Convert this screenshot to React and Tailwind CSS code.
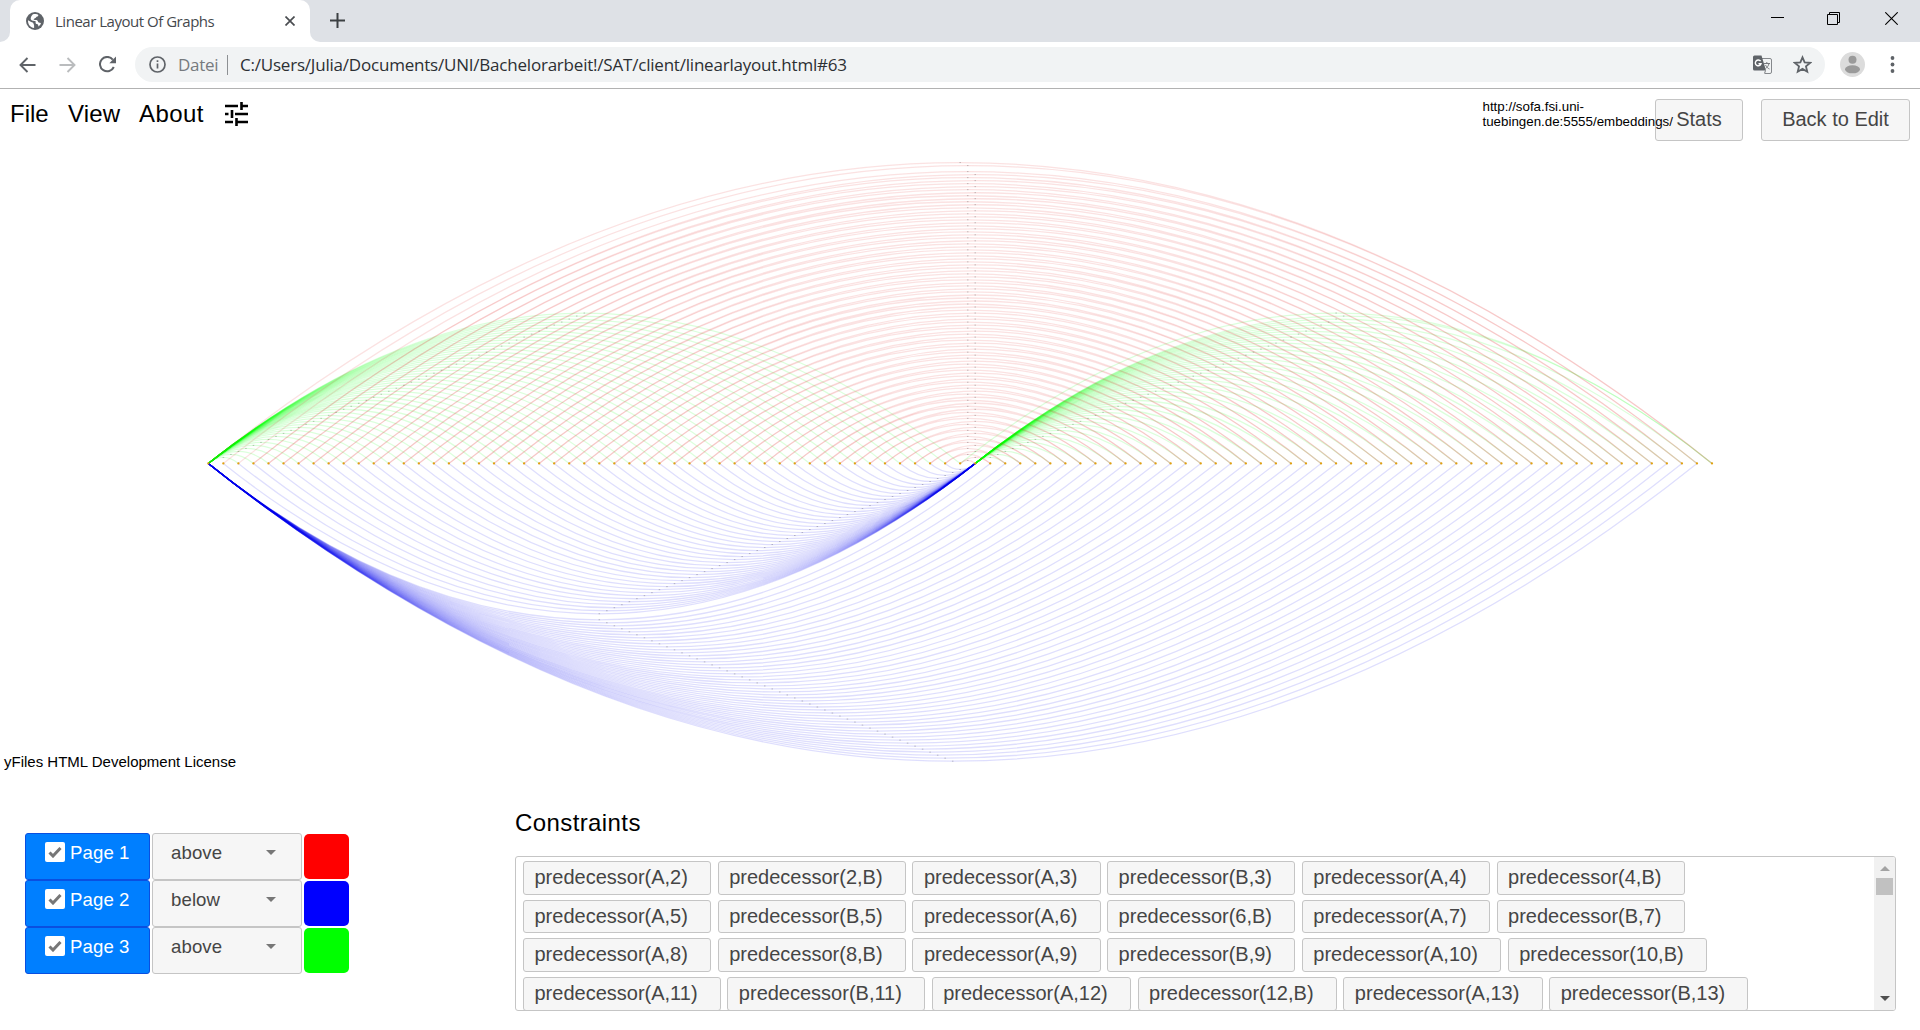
import React from "react";

const NODE_X = 208.3;
const NODE_Y = 463.4;
const STEP = 15.037;
const LAST = 100;
const B = 51;

const range = (from, to) => Array.from({ length: to - from + 1 }, (_, k) => from + k);

const redEdges = [
  [0, 100],
  ...range(1, 50).map((i) => [i, 101 - i]),
  ...range(3, 50).map((i) => [i, 102 - i]),
];
const greenEdges = [
  ...range(2, 50).map((j) => [0, j]),
  ...range(53, LAST).map((j) => [B, j]),
  [50, 100],
];
const blueEdges = [
  ...range(52, 99).map((j) => [0, j]),
  ...range(1, 49).map((i) => [i, B]),
];

const px = (i) => NODE_X + i * STEP;

function arc([a, b], dir) {
  const h = (b - a) * STEP * 0.4 * dir;
  return `M${px(a).toFixed(2)} ${NODE_Y}Q${px((a + b) / 2).toFixed(2)} ${(NODE_Y - h).toFixed(2)} ${px(b).toFixed(2)} ${NODE_Y}`;
}

function Edges({ edges, dir, color, opacity }) {
  return (
    <g fill="none" stroke={color} strokeOpacity={opacity} strokeWidth="1.25">
      {edges.map((e) => (
        <path key={e.join("-")} d={arc(e, dir)} />
      ))}
    </g>
  );
}

function EdgeLabels({ edges, dir }) {
  return (
    <g fill="#333" fillOpacity="0.35">
      {edges.map(([a, b]) => (
        <rect
          key={`${a}-${b}`}
          x={px((a + b) / 2) - 0.7}
          y={NODE_Y - (b - a) * STEP * 0.2 * dir - 0.4}
          width="1.5"
          height="0.8"
        />
      ))}
    </g>
  );
}

function Graph() {
  return (
    <svg className="block h-[600px] w-[1920px]" viewBox="0 150 1920 600" overflow="visible">
      <Edges edges={greenEdges} dir={1} color="#00ff00" opacity={0.14} />
      <Edges edges={redEdges} dir={1} color="#e02020" opacity={0.13} />
      <Edges edges={blueEdges} dir={-1} color="#0000f0" opacity={0.13} />
      <EdgeLabels edges={redEdges} dir={1} />
      <EdgeLabels edges={greenEdges} dir={1} />
      <EdgeLabels edges={blueEdges} dir={-1} />
      <g fill="#e0a010">
        {range(0, LAST).map((i) => (
          <circle key={i} cx={px(i)} cy={NODE_Y} r="1.15" />
        ))}
      </g>
    </svg>
  );
}

function TabStrip() {
  return (
    <div className="flex h-[42px] bg-[#dee1e6]">
      <div className="flex w-[10px] items-end bg-white">
        <div className="h-full w-full rounded-br-[10px] bg-[#dee1e6]" />
      </div>
      <div className="flex w-[300px] items-center rounded-t-[10px] bg-white pl-[16px] pr-[15px]">
        <svg className="size-[18px]" viewBox="0 0 18 18">
          <circle cx="9" cy="9" r="9" fill="#5f6368" />
          <path d="M2 8.200 5.200 10c.8.5 2.200.2 2.200 1.300 0 1 .7 1.200.7 2.200v2.400C4.500 15.600 2 12.600 2 9zM7 2.300c2.500-.6 4.300 0 5.400.7-.2 1.200-.9 1.700-2 1.800-.3 1.500-1.500 1.300-2.100 1.600.2 1.100-.4 1.400-1.200 1.400 1 .6 3.200-.2 4.200.6.9.7.5 1.800 1.600 2 .9.200 1.400.200 2.100 1.200-.7 1.400-1.700 2.500-2.700 3 .2-1.600-.3-2.300-1.500-2.500-1.500-.3-1.300-1.800-1.100-2.800-1.500-.4-3.700-.3-4.600-1.500C4 6.300 5.500 3.500 7 2.300z" fill="#fff" />
        </svg>
        <span className="ml-[11px] whitespace-nowrap font-['Open_Sans',sans-serif] text-[15px] tracking-[-0.48px] text-[#45494d]">
          Linear Layout Of Graphs
        </span>
        <svg className="ml-auto size-[10px]" viewBox="0 0 10 10" stroke="#4a4d51" strokeWidth="1.7">
          <path d="M.5.5l9 9M9.500.5l-9 9" />
        </svg>
      </div>
      <div className="w-[10px] bg-white">
        <div className="h-full w-full rounded-bl-[10px] bg-[#dee1e6]" />
      </div>
      <svg className="ml-[10px] mt-[13px] size-[15px]" viewBox="0 0 15 15" stroke="#3c4043" strokeWidth="2">
        <path d="M7.500 0v15M0 7.500h15" />
      </svg>
      <div className="ml-auto mr-[22px] flex items-start gap-[43px] pt-[12px]">
        <svg className="h-[13px] w-[13px]" viewBox="0 0 13 13" stroke="#000" strokeWidth="1">
          <path d="M0 5.500h13" />
        </svg>
        <svg className="size-[13px]" viewBox="0 0 13 13" fill="none" stroke="#000">
          <path d="M.5 2.500h10v10H.5zM2.500 2.500v-2h10v10h-2" />
        </svg>
        <svg className="size-[13px] ml-[2px]" viewBox="0 0 13 13" stroke="#000" strokeWidth="1.100">
          <path d="M.3.3l12.400 12.400M12.700.3.3 12.700" />
        </svg>
      </div>
    </div>
  );
}

function Toolbar() {
  return (
    <div className="flex h-[47px] items-center border-b border-[#b2b2b2] bg-white pb-px pl-[19px] font-['Open_Sans',sans-serif]">
      <svg className="h-[16px] w-[17px]" viewBox="0 0 17 16" fill="none" stroke="#5f6368" strokeWidth="1.900">
        <path d="M16.500 8H2M8.500 1 1.500 8l7 7" />
      </svg>
      <svg className="ml-[23px] h-[16px] w-[17px]" viewBox="0 0 17 16" fill="none" stroke="#babcbe" strokeWidth="1.900">
        <path d="M.5 8H15M8.500 1l7 7-7 7" />
      </svg>
      <svg className="ml-[23px] size-[17px]" viewBox="0 0 17 17" fill="none" stroke="#5f6368" strokeWidth="2">
        <path d="M14.800 11A7.200 7.200 0 1 1 13.800 3.600" />
        <path d="M17 .5v6.700h-6.700z" fill="#5f6368" stroke="none" />
      </svg>
      <div className="ml-[19px] flex h-[35px] w-[1690px] items-center rounded-full bg-[#f1f3f4] pl-[14px] pr-[13px]">
        <svg className="size-[17px]" viewBox="0 0 17 17" fill="none" stroke="#5f6368" strokeWidth="1.700">
          <circle cx="8.500" cy="8.500" r="7.500" />
          <path d="M8.500 7.500v5M8.500 4.300v1.800" />
        </svg>
        <span className="ml-[12px] w-[40px] whitespace-nowrap text-[17px] tracking-[-0.3px] text-[#767a7e]">Datei</span>
        <div className="ml-[9px] h-[20px] w-px bg-[#8d9093]" />
        <span className="ml-[12px] whitespace-nowrap text-[17px] tracking-[-0.21px] text-[#2c2f33]">
          C:/Users/Julia/Documents/UNI/Bachelorarbeit!/SAT/client/linearlayout.html#63
        </span>
        <svg className="ml-auto size-[19px]" viewBox="0 0 19 19">
          <path d="M8 3.500h9a1.500 1.500 0 0 1 1.500 1.500v12a1.500 1.500 0 0 1-1.500 1.500h-5" fill="none" stroke="#85888c" />
          <path d="M1.500.5h7l4.500 15h-11.500A1.500 1.500 0 0 1 0 14V2A1.500 1.500 0 0 1 1.500.5z" fill="#5f6368" />
          <path d="M7.600 6.200A2.900 2.900 0 1 0 8 8.800H5.500" fill="none" stroke="#fff" strokeWidth="1.400" />
          <path d="M11 8.500h6M13.800 7v1.500M16 8.500c-.5 2.500-2 4-3.500 5M12.500 10c1 2 2.500 3.500 4 4M12.500 15.500l-1 3" fill="none" stroke="#777a7e" />
        </svg>
        <svg className="ml-[21px] size-[19px]" viewBox="0 0 24 24" fill="none" stroke="#5f6368" strokeWidth="2.300">
          <path d="M12 3l2.700 6.300 6.900.6-5.200 4.500 1.600 6.700-6-3.600-6 3.600 1.600-6.700-5.200-4.500 6.900-.6z" />
        </svg>
      </div>
      <svg className="ml-[15px] size-[25px]" viewBox="0 0 25 25">
        <circle cx="12.500" cy="12.500" r="12.500" fill="#dcdcdc" />
        <circle cx="12.500" cy="7.700" r="4" fill="#9a9a9a" />
        <ellipse cx="12.500" cy="17.300" rx="7.500" ry="4" fill="#9a9a9a" />
      </svg>
      <svg className="ml-[25px] h-[17px] w-[5px]" viewBox="0 0 5 17" fill="#5f6368">
        <circle cx="2.500" cy="2" r="1.900" />
        <circle cx="2.500" cy="8.500" r="1.900" />
        <circle cx="2.500" cy="15" r="1.900" />
      </svg>
    </div>
  );
}

function MenuBar() {
  return (
    <div className="flex h-[61px] items-start pl-[10px] pr-[10px] pt-[10px]">
      <nav className="flex items-center text-[24px] leading-[29px] text-black">
        <span className="w-[58px]">File</span>
        <span className="w-[71px] tracking-[0.2px]">View</span>
        <span className="w-[85px] tracking-[0.4px]">About</span>
        <svg className="size-[24px]" viewBox="0 0 24 24" fill="none" stroke="#000" strokeWidth="2.600">
          <path d="M1 4h13M17.500 4H24M17.500 0v8M1 12h3.500M8 8v8M11 12h13M1 20h8M12.500 16v8M12.500 20H24" />
        </svg>
      </nav>
      <div className="ml-auto flex">
        <div className="w-[172.5px] whitespace-nowrap text-[13.33px] leading-[15px] text-black">
          <div>http://sofa.fsi.uni-</div>
          <div className="relative z-10">tuebingen.de:5555/embeddings/</div>
        </div>
        <button className="h-[42px] w-[88px] rounded-[3px] border border-[#c5c5c5] bg-[#f6f6f6] pb-[2px] text-[20px] text-[#454545]">Stats</button>
        <button className="ml-[18px] h-[42px] w-[149px] rounded-[3px] border border-[#c5c5c5] bg-[#f6f6f6] pb-[2px] text-[20px] text-[#454545]">
          Back to Edit
        </button>
      </div>
    </div>
  );
}

function PageRow({ name, side, swatch }) {
  return (
    <div className="flex h-[47px]">
      <div className="flex w-[125px] items-start rounded-[3px] border border-[#0a4fe0] bg-[#007fff] pl-[19px] pt-[8px]">
        <span className="flex size-[20px] items-center justify-center rounded-[2px] bg-white">
          <svg className="h-[11px] w-[14px]" viewBox="0 0 14 11" fill="none" stroke="#777" strokeWidth="3">
            <path d="M1.500 5.500 5 9l7.500-8" />
          </svg>
        </span>
        <span className="ml-[5px] whitespace-nowrap text-[18.6px] leading-[21px] tracking-[0.1px] text-white">{name}</span>
      </div>
      <div className="ml-[2px] flex w-[150px] items-start justify-between rounded-[3px] border border-[#c5c5c5] bg-[#f6f6f6] pl-[18px] pr-[25px] pt-[8px]">
        <span className="text-[18.6px] leading-[21px] tracking-[0.1px] text-[#454545]">{side}</span>
        <svg className="mt-[8px] h-[5px] w-[10px]" viewBox="0 0 10 5" fill="#777">
          <path d="M0 0h10L5 5z" />
        </svg>
      </div>
      <div className={`ml-[2px] mt-px size-[45px] rounded-[5px] ${swatch}`} />
    </div>
  );
}

const constraintRows = [
  ["A,2", "2,B", "A,3", "B,3", "A,4", "4,B"],
  ["A,5", "B,5", "A,6", "6,B", "A,7", "B,7"],
  ["A,8", "8,B", "A,9", "B,9", "A,10", "10,B"],
  ["A,11", "B,11", "A,12", "12,B", "A,13", "B,13"],
];

function Constraints() {
  return (
    <section className="w-[1381px]">
      <h2 className="text-[24px] leading-[28px] tracking-[0.4px] text-black">Constraints</h2>
      <div className="mt-[19px] flex h-[155px] overflow-hidden rounded-[3px] border border-[#c5c5c5]">
        <div className="flex flex-1 flex-col gap-[5px] pl-[7px] pt-[4px]">
          {constraintRows.map((row) => (
            <div key={row[0]} className="flex gap-[6.6px]">
              {row.map((item) => (
                <div key={item} className="h-[33.7px] shrink-0 whitespace-nowrap rounded-[3px] border border-[#c5c5c5] bg-[#f6f6f6] pl-[10.500px] pr-[22.200px] text-[20px] leading-[31px] text-[#454545]">
                  predecessor({item})
                </div>
              ))}
            </div>
          ))}
        </div>
        <div className="flex w-[21px] flex-col items-center bg-[#f1f1f1]">
          <svg className="mt-[9px] h-[5px] w-[10px]" viewBox="0 0 10 5" fill="#a3a3a3">
            <path d="M0 5h10L5 0z" />
          </svg>
          <div className="mt-[7px] h-[17px] w-[17px] bg-[#c1c1c1]" />
          <svg className="mb-[9px] mt-auto h-[5px] w-[10px]" viewBox="0 0 10 5" fill="#505050">
            <path d="M0 0h10L5 5z" />
          </svg>
        </div>
      </div>
    </section>
  );
}

export default function App() {
  return (
    <div className="h-[1030px] w-[1920px] overflow-hidden bg-white font-['Liberation_Sans',Arial,sans-serif]">
      <TabStrip />
      <Toolbar />
      <MenuBar />
      <Graph />
      <div className="h-[59px] pl-[4px] pt-[3px] text-[15px] leading-[18px] text-black">yFiles HTML Development License</div>
      <div className="flex pl-[25px]">
        <div className="w-[490px] pt-[24px]">
          <PageRow name="Page 1" side="above" swatch="bg-[#ff0000]" />
          <PageRow name="Page 2" side="below" swatch="bg-[#0000ff]" />
          <PageRow name="Page 3" side="above" swatch="bg-[#00ff00]" />
        </div>
        <Constraints />
      </div>
    </div>
  );
}
